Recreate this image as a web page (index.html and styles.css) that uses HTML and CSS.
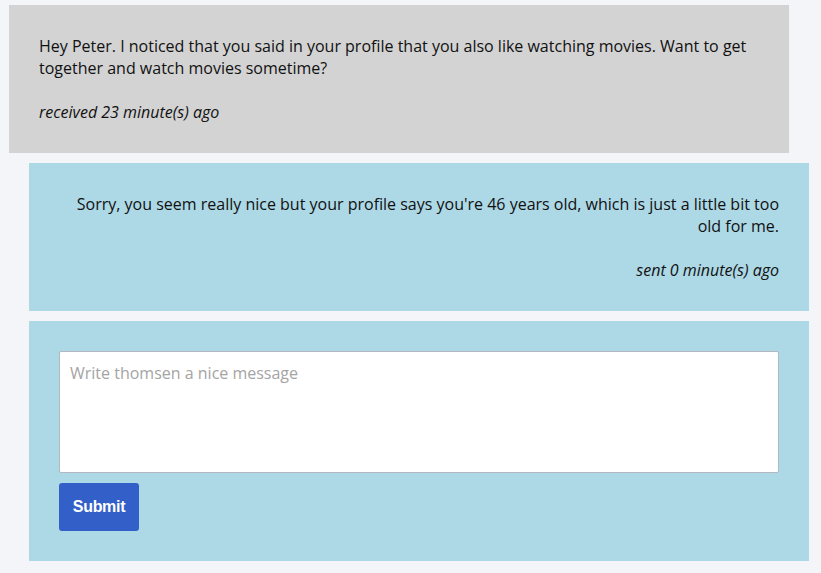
FILE: index.html
```html
<!DOCTYPE html>
<html>
<head>
<meta charset="utf-8">
<link rel="stylesheet" href="styles.css">
</head>
<body>
<div class="thread">
  <div class="msg received">
    <p>Hey Peter. I noticed that you said in your profile that you also like watching movies. Want to get together and watch movies sometime?</p>
    <p class="meta">received 23 minute(s) ago</p>
  </div>
  <div class="msg sent">
    <p>Sorry, you seem really nice but your profile says you're 46 years old, which is just a little bit too old for me.</p>
    <p class="meta">sent 0 minute(s) ago</p>
  </div>
  <form class="compose">
    <textarea class="input" placeholder="Write thomsen a nice message"></textarea>
    <div><button type="button" class="submit">Submit</button></div>
  </form>
</div>
</body>
</html>
```
FILE: styles.css
```css
html, body {
  margin: 0;
  padding: 0;
  background: #f4f5f9;
}
body {
  font-family: "Open Sans", "DejaVu Sans", sans-serif;
  font-size: 16px;
  line-height: 22px;
  color: #111;
}
.thread {
  padding: 5px 0 0 9px;
  display: flex;
  flex-direction: column;
  gap: 10px;
  width: 800px;
}
.msg {
  width: 780px;
  box-sizing: border-box;
  padding: 30px;
  display: flex;
  flex-direction: column;
  gap: 22px;
}
.msg p {
  margin: 0;
}
.received {
  background: #d3d3d3;
}
.sent {
  background: #add8e6;
  margin-left: 20px;
  text-align: right;
}
.meta {
  font-style: italic;
}
.compose {
  margin: 0 0 0 20px;
  width: 780px;
  box-sizing: border-box;
  background: #add8e6;
  padding: 30px;
  display: flex;
  flex-direction: column;
  gap: 10px;
}
.input {
  display: block;
  width: 720px;
  height: 122px;
  box-sizing: border-box;
  margin: 0;
  border: 1px solid #b3b7bf;
  border-radius: 2px;
  padding: 10px 10px;
  font-family: "Open Sans", "DejaVu Sans", sans-serif;
  font-size: 16px;
  line-height: 22px;
  resize: none;
  background: #fff;
}
.input::placeholder {
  color: #a4a4a4;
}
.submit {
  display: block;
  width: 80px;
  height: 48px;
  border: none;
  border-radius: 3px;
  background: #3360c8;
  color: #fff;
  font-family: "Liberation Sans", Arial, sans-serif;
  font-weight: bold;
  font-size: 16px;
  padding: 0;
  letter-spacing: -0.3px;
}
```
